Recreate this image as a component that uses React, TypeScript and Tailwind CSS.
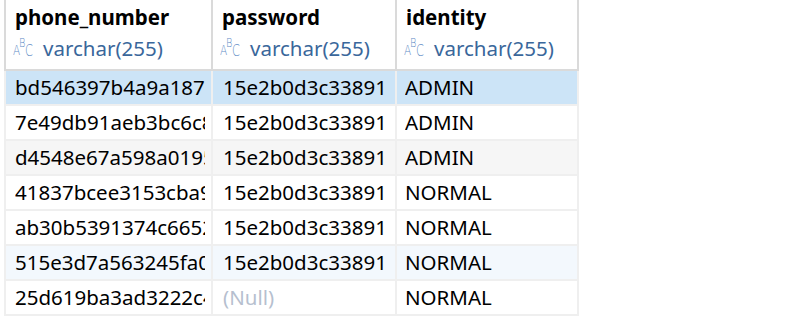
import React from "react";

const rows = [
  { a: "bd546397b4a9a1873c2e", b: "15e2b0d3c33891", c: "ADMIN", bg: "bg-[#cce4f7]" },
  { a: "7e49db91aeb3bc6c8f1a", b: "15e2b0d3c33891", c: "ADMIN", bg: "bg-white" },
  { a: "d4548e67a598a0195b2c", b: "15e2b0d3c33891", c: "ADMIN", bg: "bg-[#f6f6f6]" },
  { a: "41837bcee3153cba9d0e", b: "15e2b0d3c33891", c: "NORMAL", bg: "bg-white" },
  { a: "ab30b5391374c66527ab", b: "15e2b0d3c33891", c: "NORMAL", bg: "bg-white" },
  { a: "515e3d7a563245fa0c31", b: "15e2b0d3c33891", c: "NORMAL", bg: "bg-[#f3f8fd]" },
  { a: "25d619ba3ad3222c4e7f", b: null, c: "NORMAL", bg: "bg-white" },
];

function AbcIcon() {
  return (
    <span className="relative ml-[-2px] mr-[8px] inline-block h-[24px] w-[22px] shrink-0 leading-none text-[#5f8dc6]" style={{ fontFamily: "'DejaVu Sans', sans-serif" }}>
      <span className="absolute left-0 top-[7px] origin-left scale-x-75 text-[14px] font-light">A</span>
      <span className="absolute left-[6px] top-0 origin-left scale-x-75 text-[13px] font-light">B</span>
      <span className="absolute left-[12px] top-[8px] origin-left scale-x-75 text-[15px] font-light">C</span>
    </span>
  );
}

function HeaderCell({ name, w }: { name: string; w: string }) {
  return (
    <div className={`${w} flex h-[69px] flex-col border-r-2 border-[#dadada] bg-white pl-[9px] pr-[6px]`}>
      <div className="mt-[2px] h-[30px] whitespace-nowrap text-[20.5px] font-bold leading-[30px] text-black">{name}</div>
      <div className="flex h-[32px] items-center whitespace-nowrap text-[20.5px] text-[#3a679b]">
        <AbcIcon />
        <span>varchar(255)</span>
      </div>
    </div>
  );
}

export default function App() {
  return (
    <div className="h-[325px] w-[792px] bg-white" style={{ fontFamily: "'Noto Sans', 'Open Sans', sans-serif" }}>
      <div className="flex w-[579px]">
        <div className="w-[4px] shrink-0 bg-white" />
        <div className="flex flex-col">
          <div className="flex border-b-2 border-l-2 border-[#dadada]">
            <HeaderCell name="phone_number" w="w-[207px]" />
            <HeaderCell name="password" w="w-[184px]" />
            <HeaderCell name="identity" w="w-[182px]" />
          </div>
          {rows.map((r, i) => (
            <div key={i} className="flex h-[35px] border-b-2 border-l-2 border-[#efefef]">
              <div className={`w-[207px] border-r-2 border-[#efefef] pl-[9px] pr-[6px] ${r.bg}`}>
                <div className="overflow-hidden whitespace-nowrap text-[20.5px] leading-[33px] text-black">{r.a}</div>
              </div>
              <div className={`w-[184px] border-r-2 border-[#efefef] pl-[10px] pr-[4px] ${r.bg}`}>
                <div className="overflow-hidden whitespace-nowrap text-[20.5px] leading-[33px] text-black">
                  {r.b === null ? <span className="text-[#b6bfcf]">(Null)</span> : r.b}
                </div>
              </div>
              <div className={`w-[182px] border-r-2 border-[#efefef] pl-[8px] pr-[6px] ${r.bg}`}>
                <div className="overflow-hidden whitespace-nowrap text-[20.5px] leading-[33px] text-black">{r.c}</div>
              </div>
            </div>
          ))}
        </div>
      </div>
    </div>
  );
}
